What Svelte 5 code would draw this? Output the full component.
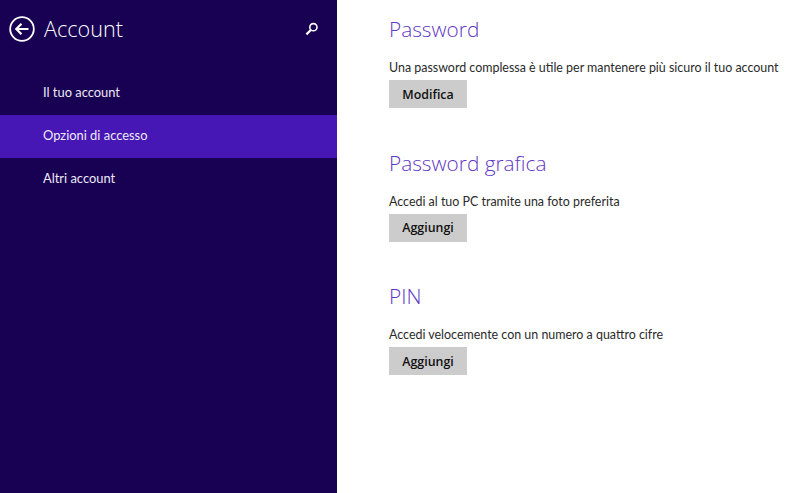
<script>
	const sections = [
		{ title: 'Password', text: 'Una password complessa è utile per mantenere più sicuro il tuo account', action: 'Modifica' },
		{ title: 'Password grafica', text: 'Accedi al tuo PC tramite una foto preferita', action: 'Aggiungi' },
		{ title: 'PIN', text: 'Accedi velocemente con un numero a quattro cifre', action: 'Aggiungi' }
	];
	const navItems = ['Il tuo account', 'Opzioni di accesso', 'Altri account'];
	const selected = 1;
</script>

<div class="page">
	<aside class="sidebar">
		<header class="top">
			<svg class="back" width="26" height="26" viewBox="0 0 26 26" fill="none" stroke="#fff">
				<circle cx="13" cy="13" r="11.8" stroke-width="1.8" />
				<path d="M19.5 13H7.5M12.5 7.8L7.3 13l5.2 5.2" stroke-width="2.2" />
			</svg>
			<h1>Account</h1>
			<svg class="search" width="14" height="14" viewBox="0 0 14 14" fill="none" stroke="#fff">
				<circle cx="8.4" cy="5.2" r="3.6" stroke-width="1.6" />
				<path d="M5.8 8L1.4 12.4" stroke-width="2.2" />
			</svg>
		</header>
		<nav>
			{#each navItems as item, i}
				<div class="nav-item" class:active={i === selected}>{item}</div>
			{/each}
		</nav>
	</aside>
	<main>
		{#each sections as s}
			<section>
				<h2>{s.title}</h2>
				<p>{s.text}</p>
				<button>{s.action}</button>
			</section>
		{/each}
	</main>
</div>

<style>
	:global(body) {
		margin: 0;
		background: #fff;
	}

	.page {
		display: flex;
		width: 800px;
		height: 493px;
		overflow: hidden;
		font-family: 'Open Sans', 'Liberation Sans', sans-serif;
	}

	.sidebar {
		width: 337px;
		flex: none;
		background: #180052;
		color: #fff;
	}

	.top {
		display: flex;
		align-items: center;
		height: 57px;
		padding: 0 18px 0 9px;
	}

	.back {
		flex: none;
		margin-right: 9px;
	}

	h1 {
		flex: 1;
		margin: 0;
		font-size: 21.6px;
		font-weight: 300;
		line-height: 57px;
	}

	nav {
		margin-top: 14.6px;
	}

	.nav-item {
		height: 43.4px;
		line-height: 41px;
		padding-left: 43px;
		font-family: Lato, 'Open Sans', sans-serif;
		font-size: 12.9px;
		color: #eee9f6;
	}

	.nav-item.active {
		background: #4617b4;
	}

	main {
		flex: 1;
		padding: 14px 0 0 52px;
	}

	section {
		height: 133.6px;
	}

	h2 {
		margin: 0;
		font-size: 20.8px;
		font-weight: 300;
		line-height: 30px;
		color: #5f37c4;
	}

	p {
		margin: 15px 0 0;
		font-family: Lato, 'Open Sans', sans-serif;
		font-size: 12.45px;
		line-height: 18px;
		color: #2a2a2a;
		white-space: nowrap;
	}

	button {
		display: block;
		width: 78px;
		height: 28px;
		margin-top: 3px;
		padding: 0;
		border: none;
		background: #cccccc;
		font: 600 12.4px 'Open Sans', 'Liberation Sans', sans-serif;
		color: #111;
	}
</style>
